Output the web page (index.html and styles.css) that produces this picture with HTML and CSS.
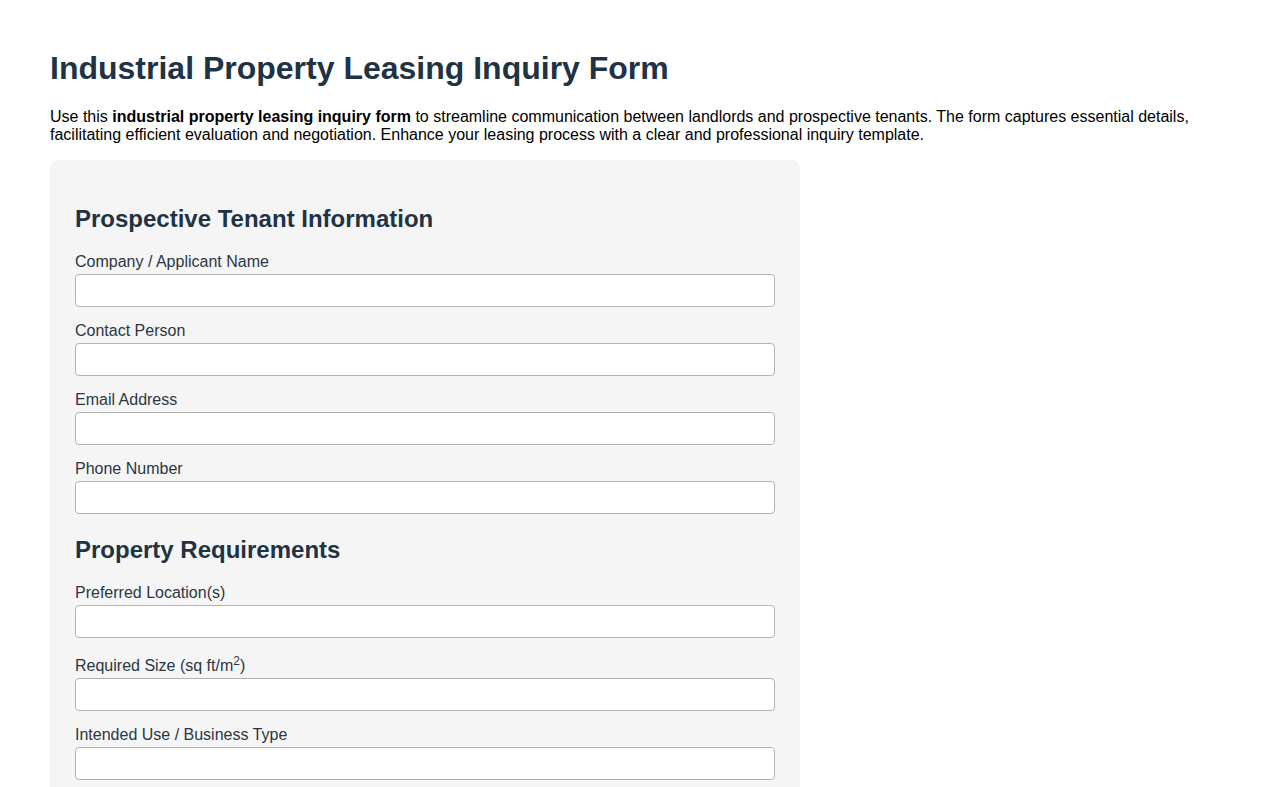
FILE: index.html
```html
<!DOCTYPE html>
<html lang="en">
<head>
<meta charset="utf-8">
<title>Industrial Property Leasing Inquiry Form</title>
<link rel="stylesheet" href="styles.css">
</head>
<body>
<main class="page">
  <h1 class="title">Industrial Property Leasing Inquiry Form</h1>
  <p class="intro">Use this <strong>industrial property leasing inquiry form</strong> to streamline communication between landlords and prospective tenants. The form captures essential details, facilitating efficient evaluation and negotiation. Enhance your leasing process with a clear and professional inquiry template.</p>
  <form class="card">
    <section class="section">
      <h2 class="section-title">Prospective Tenant Information</h2>
      <div class="field">
        <label class="label" for="company">Company / Applicant Name</label>
        <input class="input" type="text" id="company">
      </div>
      <div class="field">
        <label class="label" for="contact">Contact Person</label>
        <input class="input" type="text" id="contact">
      </div>
      <div class="field">
        <label class="label" for="email">Email Address</label>
        <input class="input" type="email" id="email">
      </div>
      <div class="field">
        <label class="label" for="phone">Phone Number</label>
        <input class="input" type="tel" id="phone">
      </div>
    </section>
    <section class="section">
      <h2 class="section-title">Property Requirements</h2>
      <div class="field">
        <label class="label" for="location">Preferred Location(s)</label>
        <input class="input" type="text" id="location">
      </div>
      <div class="field">
        <label class="label" for="size">Required Size (sq ft/m<sup>2</sup>)</label>
        <input class="input" type="text" id="size">
      </div>
      <div class="field">
        <label class="label" for="use">Intended Use / Business Type</label>
        <input class="input" type="text" id="use">
      </div>
      <div class="field">
        <label class="label" for="date">Desired Move-in Date</label>
        <input class="input" type="text" id="date">
      </div>
    </section>
  </form>
</main>
</body>
</html>
```

FILE: styles.css
```css
html, body {
  margin: 0;
  padding: 0;
  background: #ffffff;
}

body {
  font-family: "Liberation Sans", Arial, sans-serif;
  font-size: 16px;
  color: #000000;
}

.page {
  padding: 50px;
}

.title {
  margin: 0 0 21px;
  font-size: 32px;
  font-weight: bold;
  color: #1f3344;
}

.intro {
  margin: 0 0 16px;
}

.intro strong {
  font-weight: bold;
}

.card {
  width: 750px;
  box-sizing: border-box;
  padding: 25px;
  background: #f5f5f5;
  border-radius: 8px;
}

.section {
  margin-top: 20px;
}

.section + .section {
  margin-top: 22px;
}

.section-title {
  margin: 0 0 20px;
  font-size: 24px;
  font-weight: bold;
  color: #1f3344;
}

.field {
  margin-bottom: 15px;
}

.label {
  display: block;
  margin-bottom: 3px;
  line-height: 18px;
  color: #2b3742;
}

.label sup {
  font-size: 12px;
  line-height: 16px;
}

.input {
  display: block;
  width: 100%;
  height: 33px;
  box-sizing: border-box;
  margin: 0;
  padding: 6px 8px;
  font-family: inherit;
  font-size: 16px;
  background: #ffffff;
  border: 1px solid #b3b3b3;
  border-radius: 4px;
}
```
